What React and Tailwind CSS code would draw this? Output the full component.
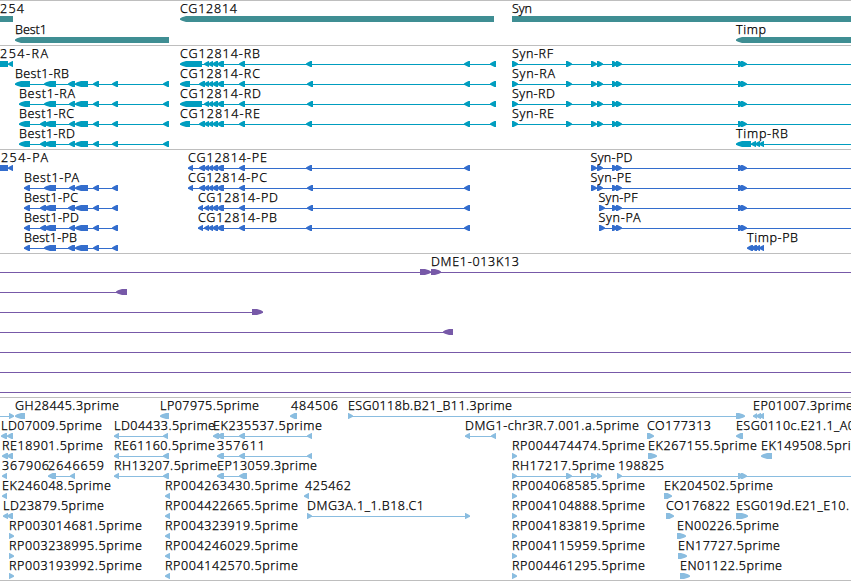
const GENE = '#3f8e93'
const TRANSCRIPT = '#009dbf'
const PROTEIN = '#336dcd'
const CLONE = '#7759a8'
const EST = '#8abde0'

// feature: text, label x, label width, direction, blocks, optional connector [from, to]
const f = (text, x, w, dir, blocks, line) => ({ text, x, w, dir, blocks, line })

const SYN = [[512, 518], [566, 572], [591, 597], [597, 603], [612, 618], [616, 622], [738, 744], [741, 747]]
const SYN_P = SYN.slice(2)
const SYN_P2 = [[599, 605], ...SYN.slice(4)]
const CG_MID = [[204, 209], [208, 213], [212, 218], [217, 224], [239, 245]]
const BEST_END = [[75, 88], [93, 99], [112, 118]]

const genes = [
    [
        f('254', 0, 24, '=', [[-5, 13]]),
        f('CG12814', 180, 57, '<', [[180, 494]]),
        f('Syn', 512, 20, '=', [[512, 860]]),
    ],
    [f('Best1', 15, 32, '<', [[15, 169]]), f('Timp', 736, 30, '<', [[736, 860]])],
]

const transcripts = [
    [
        f('254-RA', 0, 48, '<', [[-8, 8], [8, 13]]),
        f('CG12814-RB', 180, 80, '<', [[180, 202], ...CG_MID, [306, 312], [464, 470], [490, 496]], [180, 496]),
        f('Syn-RF', 512, 41, '>', SYN, [512, 851]),
    ],
    [
        f('Best1-RB', 15, 54, '<', [[15, 30], [44, 56], [68, 75], ...BEST_END, [163, 169]], [15, 169]),
        f('CG12814-RC', 180, 80, '<', [[180, 190], [199, 205], ...CG_MID, [307, 313], [464, 470], [490, 496]], [180, 496]),
        f('Syn-RA', 512, 43, '>', SYN, [512, 851]),
    ],
    [
        f('Best1-RA', 19, 56, '<', [[19, 30], [44, 56], [69, 75], ...BEST_END, [163, 169]], [19, 169]),
        f('CG12814-RD', 180, 81, '<', [[180, 202], ...CG_MID, [307, 313], [464, 470], [490, 496]], [180, 496]),
        f('Syn-RD', 512, 43, '>', SYN, [512, 851]),
    ],
    [
        f('Best1-RC', 19, 55, '<', [[19, 30], [40, 46], [44, 56], [69, 75], ...BEST_END, [163, 169]], [19, 169]),
        f('CG12814-RE', 180, 80, '<', [[180, 190], [199, 205], ...CG_MID, [306, 312], [464, 470], [490, 496]], [180, 496]),
        f('Syn-RE', 512, 42, '>', SYN, [512, 851]),
    ],
    [
        f('Best1-RD', 19, 56, '<', [[19, 30], [40, 46], [44, 56], [69, 75], ...BEST_END, [163, 169]], [19, 169]),
        f('Timp-RB', 736, 52, '<', [[736, 751], [751, 756], [755, 760], [759, 764]], [736, 851]),
    ],
]

const proteins = [
    [
        f('254-PA', 1, 47, '<', [[-8, 8], [8, 13]]),
        f('CG12814-PE', 188, 79, '<', [[188, 193], [199, 205], ...CG_MID, [306, 312], [464, 470]], [188, 470]),
        f('Syn-PD', 590.5, 42, '>', SYN_P, [591, 851]),
    ],
    [
        f('Best1-PA', 24, 55, '<', [[24, 30], [44, 56], [69, 75], ...BEST_END], [24, 118]),
        f('CG12814-PC', 188, 79, '<', [[188, 193], [199, 205], ...CG_MID, [307, 313], [464, 470]], [188, 470]),
        f('Syn-PE', 590.5, 41, '>', SYN_P, [591, 851]),
    ],
    [
        f('Best1-PC', 24, 54, '<', [[24, 30], [40, 46], [44, 56], [68, 75], ...BEST_END], [24, 118]),
        f('CG12814-PD', 198, 80, '<', [[198, 203], ...CG_MID, [307, 313], [464, 470]], [198, 470]),
        f('Syn-PF', 598.5, 39, '>', SYN_P2, [599, 851]),
    ],
    [
        f('Best1-PD', 24, 55, '<', [[24, 30], [40, 46], [44, 56], [69, 75], ...BEST_END], [24, 118]),
        f('CG12814-PB', 198, 79, '<', [[198, 203], ...CG_MID, [306, 312], [464, 470]], [198, 470]),
        f('Syn-PA', 598.5, 42, '>', SYN_P2, [599, 851]),
    ],
    [
        f('Best1-PB', 24, 53, '<', [[24, 30], [44, 56], [68, 75], ...BEST_END], [24, 118]),
        f('Timp-PB', 747, 51, '<', [[747, 753], [751, 757], [755, 760], [759, 764]]),
    ],
]

const clones = [
    [f('DME1-013K13', 431, 88, '>', [[420, 431], [431, 441]], [0, 851])],
    [f('', 0, 0, '<', [[116, 127]], [0, 127])],
    [f('', 0, 0, '>', [[252, 263]], [0, 263])],
    [f('', 0, 0, '<', [[443, 453]], [0, 453])],
    [f('', 0, 0, '>', [], [0, 851])],
    [f('', 0, 0, '>', [], [0, 851])],
    [f('', 0, 0, '>', [], [0, 851])],
]

const ests = [
    [
        f('', 0, 0, '>', [[9, 14]], [0, 14]),
        f('GH28445.3prime', 15, 104, '<', [[15, 25]]),
        f('LP07975.5prime', 160, 99, '<', [[160, 169]]),
        f('484506', 291, 47, '<', [[290, 297]]),
        f('ESG0118b.B21_B11.3prime', 348, 164, '>', [[348, 353], [736, 745]], [348, 740]),
        f('EP01007.3prime', 753, 100, '<', [[753, 757], [756, 761], [759, 764]]),
    ],
    [
        f('LD07009.5prime', 1, 101, '<', [[1, 7], [7, 13]]),
        f('LD04433.5prime', 114, 101, '<', [[114, 119], [163, 168]], [114, 168]),
        f('EK235537.5prime', 213, 109, '<', [[213, 219], [217, 224], [239, 245], [307, 312]], [213, 312]),
        f('DMG1-chr3R.7.001.a.5prime', 465, 174, '<', [[465, 470], [491, 496]], [465, 496]),
        f('CO177313', 647, 64, '>', [[647, 654]]),
        f('ESG0110c.E21.1_A0', 736, 119, '<', [[736, 743]]),
    ],
    [
        f('RE18901.5prime', 2, 101, '<', [[2, 8], [7, 13]]),
        f('RE61160.5prime', 114, 101, '<', [[114, 119], [163, 169]], [114, 169]),
        f('357611', 217, 48, '<', [[217, 224], [239, 245], [307, 312]], [217, 312]),
        f('RP004474474.5prime', 512, 133, '>', [[512, 517]]),
        f('EK267155.5prime', 648, 109, '>', [[648, 657]]),
        f('EK149508.5prime', 761, 109, '<', [[761, 772]]),
    ],
    [
        f('367906', 2, 47, '<', [[2, 7]]),
        f('2646659', 48, 56, '<', [[48, 56], [70, 75]], [48, 75]),
        f('RH13207.5prime', 114, 103, '<', [[114, 119], [163, 169]], [114, 169]),
        f('EP13059.3prime', 217, 100, '<', [[217, 224], [239, 247]], [217, 247]),
        f('RH17217.5prime', 512, 103, '>', [[512, 517], [566, 572], [591, 597], [597, 602]], [512, 602]),
        f('198825', 618, 46, '>', [[617, 622], [738, 744], [741, 747]], [617, 851]),
    ],
    [
        f('EK246048.5prime', 2, 109, '<', [[2, 7]]),
        f('RP004263430.5prime', 165, 133, '<', [[165, 170]]),
        f('425462', 305, 46, '<', [[304, 309]]),
        f('RP004068585.5prime', 512, 133, '>', [[512, 517]]),
        f('EK204502.5prime', 664, 109, '>', [[664, 672]]),
    ],
    [
        f('LD23879.5prime', 3, 101, '<', [[3, 8], [7, 13]]),
        f('RP004422665.5prime', 165, 133, '<', [[165, 170]]),
        f('DMG3A.1_1.B18.C1', 307, 117, '>', [[307, 312], [465, 470]], [307, 470]),
        f('RP004104888.5prime', 512, 133, '>', [[512, 517]]),
        f('CO176822', 666, 64, '>', [[666, 674]]),
        f('ESG019d.E21_E10.', 736, 113, '>', [[736, 748]]),
    ],
    [
        f('RP003014681.5prime', 9, 133, '>', [[9, 14]]),
        f('RP004323919.5prime', 165, 133, '<', [[165, 170]]),
        f('RP004183819.5prime', 512, 133, '>', [[512, 517]]),
        f('EN00226.5prime', 677, 102, '>', [[677, 686]]),
    ],
    [
        f('RP003238995.5prime', 9, 133, '>', [[9, 14]]),
        f('RP004246029.5prime', 165, 133, '<', [[165, 170]]),
        f('RP004115959.5prime', 512, 133, '>', [[512, 517]]),
        f('EN17727.5prime', 678, 102, '>', [[678, 687]]),
    ],
    [
        f('RP003193992.5prime', 9, 133, '>', [[9, 14]]),
        f('RP004142570.5prime', 165, 133, '<', [[165, 170]]),
        f('RP004461295.5prime', 512, 133, '>', [[512, 517]]),
        f('EN01122.5prime', 680, 102, '>', [[680, 690]]),
    ],
]

// wide blocks get a blunt, slightly rounded head; narrow ones are plain triangles
function blockPath(dir, a, b) {
    if (dir === '=') return `M${a} 15H${b}V21H${a}Z`
    const s = dir === '<' ? 1 : -1
    const tip = s === 1 ? a : b
    const back = s === 1 ? b : a
    const head = Math.min(b - a > 8 ? 6 : 4.5, b - a)
    return `M${tip} 17.4L${tip + s * 2} 16.3L${tip + s * head} 15H${back}V21H${tip + s * head}L${tip + s * 2} 19.7L${tip} 18.8Z`
}

function Row({ features, color, tall }) {
    return (
        <svg width="851" height={tall ? 21 : 20} className={tall ? 'block h-[21px] overflow-visible' : 'block h-5 overflow-visible'}>
            {features.map((ft, i) => (
                <g key={i} fill={color}>
                    {ft.line && <rect x={ft.line[0]} y="18" width={ft.line[1] - ft.line[0]} height="1" />}
                    {ft.blocks.map(([a, b], k) => (
                        <path key={k} d={blockPath(ft.dir, a, b)} />
                    ))}
                    {ft.text && (
                        <text x={ft.x} y="12" textLength={ft.w} className="text-[12.5px] font-light fill-black stroke-black [stroke-width:0.25px]">
                            {ft.text}
                        </text>
                    )}
                </g>
            ))}
        </svg>
    )
}

function Track({ rows, color, tall, className }) {
    return (
        <section className={`border-t border-[#bebebe] ${className}`}>
            {rows.map((features, i) => (
                <Row key={i} features={features} color={color} tall={tall} />
            ))}
        </section>
    )
}

export default function App() {
    return (
        <main className="w-[851px] h-[581px] overflow-hidden bg-white border-b border-[#bebebe] font-['Noto_Sans',sans-serif]">
            <Track rows={genes} color={GENE} tall className="pb-[2px]" />
            <Track rows={transcripts} color={TRANSCRIPT} className="pb-[3px]" />
            <Track rows={proteins} color={PROTEIN} className="pb-[3px]" />
            <Track rows={clones} color={CLONE} className="pb-[3px]" />
            <Track rows={ests} color={EST} className="pb-[2px]" />
        </main>
    )
}
